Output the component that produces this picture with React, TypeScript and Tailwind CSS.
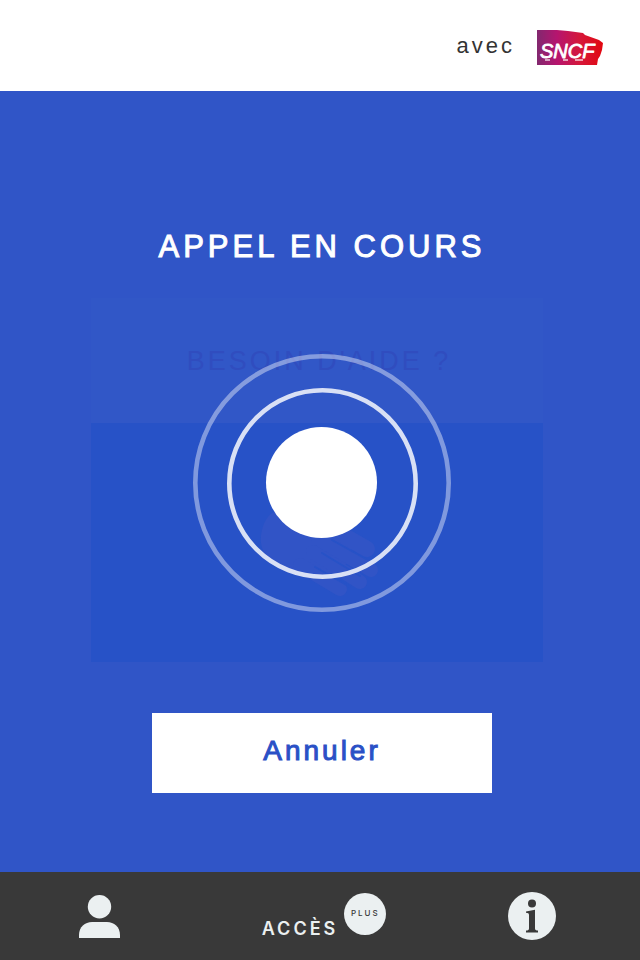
function SncfLogo() {
  return (
    <svg width="66" height="35" viewBox="0 0 66 35" role="img" aria-label="SNCF">
      <defs>
        <linearGradient id="sncf" x1="0" y1="0" x2="1" y2="0">
          <stop offset="0" stopColor="#82286f" />
          <stop offset="0.3" stopColor="#b5156f" />
          <stop offset="0.65" stopColor="#d5173a" />
          <stop offset="1" stopColor="#e2070f" />
        </linearGradient>
      </defs>
      <path d="M0 0H20L31 1L46 3L48 5L62 10L66 13L65 20L63 26L61 29L60 35H0Z" fill="url(#sncf)" />
      <text
        x="3"
        y="28"
        fill="#fff"
        stroke="#fff"
        strokeWidth="0.8"
        strokeLinejoin="round"
        className="font-['Liberation_Sans',Arial,sans-serif] text-[20px] italic"
      >
        SNCF
      </text>
      <path d="M8 30h5M26 30h5M38 30h8" stroke="#fff" strokeWidth="2" opacity="0.6" />
    </svg>
  );
}

function HelpPanel() {
  return (
    <div className="mr-[10px] flex w-full max-w-[452px] flex-col [grid-area:1/1]" aria-hidden="true">
      <div className="bg-[#3157c7] pt-[45px] pb-[44px] pl-1 text-center text-[27px] leading-9 tracking-[3px] text-[#304dbf]">
        BESOIN D'AIDE ?
      </div>
      <div className="h-[239px] bg-[#2752c7]">
        <svg className="mx-auto" width="452" height="239" viewBox="91 423 452 239">
          <path
            d="M274 512C264 517 260 532 261 543C263 557 273 566 287 571L318 582L352 560L350 525L320 500Z"
            fill="#3154c6"
          />
          <g stroke="#3154c6" strokeLinecap="round">
            <path d="M325 525L367 549" strokeWidth="16" />
            <path d="M318 539L371 570" strokeWidth="14" />
            <path d="M313 552L360 582" strokeWidth="14" />
            <path d="M300 565L340 589" strokeWidth="14" />
          </g>
          <g stroke="#2752c7" strokeWidth="2" strokeLinecap="round">
            <path d="M332 540L366 559" />
            <path d="M322 553L360 576" />
            <path d="M315 567L350 587" />
          </g>
        </svg>
      </div>
    </div>
  );
}

function CallPulse() {
  return (
    <svg className="z-10 mt-[5px] [grid-area:1/1]" width="258" height="258" viewBox="0 0 258 258" fill="none">
      <circle cx="129" cy="129" r="126.7" stroke="#fff" strokeOpacity="0.41" strokeWidth="4.6" />
      <circle cx="129.5" cy="129.5" r="93.2" stroke="#fff" strokeOpacity="0.82" strokeWidth="4.6" />
      <circle cx="128.5" cy="128.5" r="55.5" fill="#fff" />
    </svg>
  );
}

export default function App() {
  return (
    <div className="flex min-h-screen flex-col bg-[#3055c7] font-['Liberation_Sans',Arial,sans-serif]">
      <header className="flex h-[91px] items-end justify-end gap-[22px] bg-white pr-[37px] pb-[26px]">
        <span className="pb-1 text-[22px] leading-[30px] tracking-[3px] text-[#333]">avec</span>
        <SncfLogo />
      </header>

      <main className="flex flex-1 flex-col items-center pt-[136px] pb-[79px] pl-1">
        <h1 className="text-[31px] leading-10 tracking-[4px] text-white [-webkit-text-stroke:1px_white]">
          APPEL EN COURS
        </h1>
        <section className="mt-[31px] grid w-full place-items-center" aria-label="Appel en cours">
          <HelpPanel />
          <CallPulse />
        </section>
        <button
          type="button"
          className="mt-[51px] h-20 w-[340px] bg-white pb-1 text-[28px] leading-9 tracking-[3px] text-[#2a50c6] [-webkit-text-stroke:1px_#2a50c6]"
        >
          Annuler
        </button>
      </main>

      <footer className="bg-[#393939] text-[#ebf0f1]">
        <nav className="flex h-[88px] items-center justify-between pr-[84px] pl-[79px]">
          <button type="button" aria-label="Profil">
            <svg width="41" height="43" viewBox="0 0 41 43" fill="currentColor">
              <circle cx="20.5" cy="11.7" r="11.7" />
              <path d="M0 43V40C0 32 6 27 13 27H28C35 27 41 32 41 40V43Z" />
            </svg>
          </button>
          <button type="button" className="ml-5 flex items-end gap-[6px]">
            <span className="font-[Inter,sans-serif] text-[18px] leading-5 font-semibold tracking-[3px]">ACCÈS</span>
            <span className="mb-1 flex size-[42px] items-center justify-center rounded-full bg-[#ebf0f1] pb-[2px] font-[Inter,sans-serif] text-[8px] leading-3 font-medium tracking-[2px] text-[#393939]">
              PLUS
            </span>
          </button>
          <button type="button" aria-label="Informations">
            <svg width="48" height="48" viewBox="0 0 48 48">
              <circle cx="24" cy="24" r="24" fill="currentColor" />
              <circle cx="24" cy="11.5" r="4" fill="#393939" />
              <path
                d="M18 19.5L27 17.7V36.5Q27 38.5 30 38.5V40.5H18V38.5Q21 38.5 21 36.5V23Q21 20.7 18 20.7Z"
                fill="#393939"
              />
            </svg>
          </button>
        </nav>
      </footer>
    </div>
  );
}
